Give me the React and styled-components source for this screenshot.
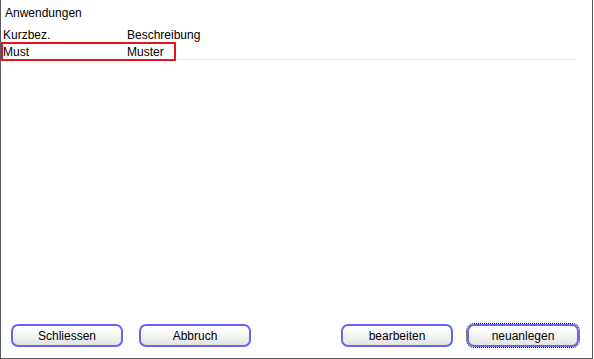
import React from 'react';
import styled, { createGlobalStyle } from 'styled-components';

const GlobalStyle = createGlobalStyle`
  html, body {
    margin: 0;
    padding: 0;
    background: #ffffff;
  }
  body {
    font-family: "Liberation Sans", Arial, sans-serif;
    font-size: 12px;
    color: #000;
  }
`;

const Window = styled.div`
  box-sizing: border-box;
  width: 593px;
  height: 359px;
  background: #ffffff;
  border-left: 1px solid #5a5a62;
  border-right: 1px solid #5a5a62;
  border-bottom: 1px solid #5a5a62;
  display: flex;
  flex-direction: column;
`;

const Title = styled.div`
  padding: 6px 0 0 4px;
  height: 19px;
  line-height: 14px;
  font-size: 12px;
`;

const Table = styled.div`
  display: flex;
  flex-direction: column;
  width: 575px;
  margin-top: 3px;
`;

const Row = styled.div`
  box-sizing: border-box;
  display: grid;
  grid-template-columns: 124px 1fr;
  height: ${(p) => (p.$head ? '14px' : '18px')};
  line-height: 14px;
  padding-left: 2px;
  padding-top: ${(p) => (p.$head ? '0' : '3px')};
  border-bottom: ${(p) => (p.$head ? 'none' : '1px solid #ececec')};
  position: relative;
`;

const Cell = styled.span`
  white-space: nowrap;
`;

const SelectBox = styled.div`
  position: absolute;
  left: 0;
  top: 0;
  width: 175px;
  height: 19px;
  box-sizing: border-box;
  border: 2px solid #e8141c;
`;

const Spacer = styled.div`
  flex: 1;
`;

const ButtonBar = styled.div`
  display: flex;
  align-items: center;
  padding: 0 13px 11px 10px;
`;

const Group = styled.div`
  display: flex;
  gap: ${(p) => p.$gap || 16}px;
`;

const Button = styled.button`
  box-sizing: border-box;
  width: 112px;
  height: 23px;
  border: 2px solid #6666ee;
  border-radius: 7px;
  background: linear-gradient(#ffffff 0%, #f7f7f7 45%, #e2e2e2 100%);
  font-family: "Liberation Sans", Arial, sans-serif;
  font-size: 12px;
  color: #000;
  padding: 0;
  outline: ${(p) => (p.$focus ? '1px dotted #000' : 'none')};
  outline-offset: 0;
`;

export default function App() {
  return (
    <>
      <GlobalStyle />
      <Window>
        <Title>Anwendungen</Title>
        <Table>
          <Row $head>
            <Cell>Kurzbez.</Cell>
            <Cell>Beschreibung</Cell>
          </Row>
          <Row>
            <Cell>Must</Cell>
            <Cell>Muster</Cell>
            <SelectBox />
          </Row>
        </Table>
        <Spacer />
        <ButtonBar>
          <Group>
            <Button>Schliessen</Button>
            <Button>Abbruch</Button>
          </Group>
          <Spacer />
          <Group $gap={14}>
            <Button>bearbeiten</Button>
            <Button $focus>neuanlegen</Button>
          </Group>
        </ButtonBar>
      </Window>
    </>
  );
}
